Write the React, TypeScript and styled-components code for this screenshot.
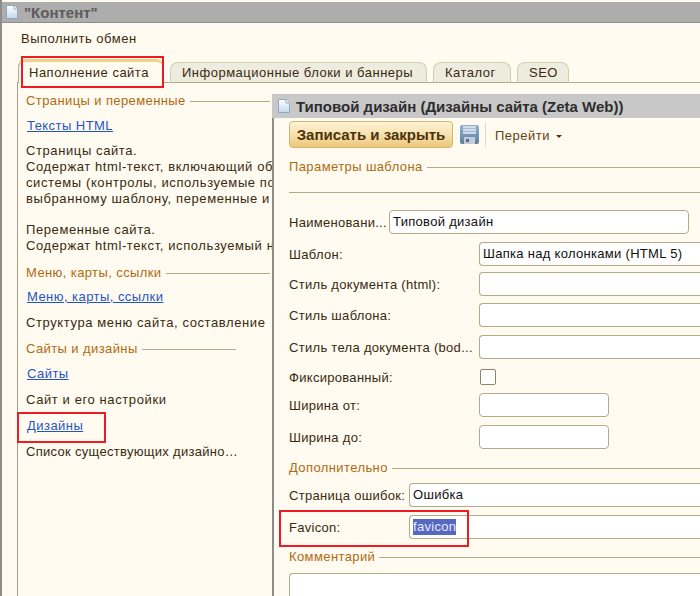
import styled, {createGlobalStyle} from "styled-components";

const GlobalStyle = createGlobalStyle`
  html, body {
    margin: 0;
    padding: 0;
    overflow: hidden;
    background: #fffbf0;
  }
  body {
    font-family: "Liberation Sans", Arial, sans-serif;
    font-size: 13px;
    color: #3a2a10;
  }
`;

const Page = styled.div`
  position: relative;
  width: 700px;
  height: 596px;
  overflow: hidden;
  box-sizing: border-box;
  padding-top: 2px;
  border-left: 2px solid #8c8c8c;
  background: #fffbf0;
`;
const TitleBar = styled.div`
  display: flex;
  align-items: center;
  gap: 6px;
  height: ${props => (props.$active ? 24 : 20)}px;
  margin-left: -2px;
  padding-left: 6px;
  background: ${props => (props.$active ? "#c8c8c8" : "#adadad")};
  border-bottom: ${props => (props.$active ? "none" : "1px solid #8c8c8c")};
  font-size: 15px;
  font-weight: 700;
  color: ${props => (props.$active ? "#2e2e2e" : "#5c5c5c")};
  white-space: nowrap;
`;
const ExchangeLink = styled.div`
  height: 16px;
  padding: 8px 0 0 19px;
  line-height: 16px;
  letter-spacing: 0.5px;
`;
const Tabs = styled.div`
  display: flex;
  align-items: flex-end;
  height: 23px;
  margin: 13px 0 0 16px;
  gap: 6px;
`;
const Tab = styled.div`
  box-sizing: border-box;
  height: ${props => (props.$active ? "24px" : "21px")};
  width: ${props => props.$width}px;
  padding-left: ${props => (props.$active ? 10 : 11)}px;
  line-height: ${props => (props.$active ? "21px" : "19px")};
  border: 1px solid ${props => (props.$active ? "#b5aa86" : "#d3cdb2")};
  border-bottom: ${props => (props.$active ? "none" : "1px solid #b5aa86")};
  border-top: ${props => (props.$active ? "3px solid #f4cf87" : "1px solid #d3cdb2")};
  border-radius: 8px 8px 0 0;
  background: ${props => (props.$active ? "#fffbf0" : "#eeebdf")};
  letter-spacing: 0.5px;
  white-space: nowrap;
  position: relative;
  z-index: 1;
`;
const Panel = styled.div`
  margin: -1px 0 0 15px;
  height: 520px;
  padding: 8px 0 0 8px;
  border-left: 1px solid #a5a08a;
  border-top: 1px solid #b5aa86;
`;
const SectionHead = styled.div`
  display: flex;
  align-items: center;
  gap: 4px;
  height: 18px;
  width: ${props => props.$width}px;
  margin-top: ${props => props.$top ?? 0}px;
  color: #b06a12;
  letter-spacing: 0.4px;
  white-space: nowrap;
  &::after {
    content: "";
    flex: 1;
    height: 1px;
    margin-top: 2px;
    background: #b5aa86;
  }
`;
const PageLink = styled.a`
  display: block;
  width: fit-content;
  margin: ${props => props.$top}px 0 0 1px;
  line-height: 16px;
  color: #1f55c4;
  text-decoration: underline;
  letter-spacing: 0.45px;
`;
const Description = styled.div`
  margin-top: ${props => props.$top}px;
  line-height: 16px;
  letter-spacing: ${props => props.$spacing ?? 0.6}px;
  white-space: nowrap;
`;
const DocWindow = styled.div`
  position: absolute;
  left: 270px;
  top: 94px;
  width: 430px;
  height: 502px;
  background: #fffbf0;
  border-left: 2px solid #8c8c8c;
`;
const Toolbar = styled.div`
  display: flex;
  align-items: center;
  height: 29px;
  margin: 2px 0 0 15px;
`;
const SaveButton = styled.div`
  box-sizing: border-box;
  width: 164px;
  height: 27px;
  line-height: 25px;
  text-align: center;
  border: 1px solid #d9b46c;
  border-radius: 4px;
  background: linear-gradient(#fdf2d6, #f7dfa8 55%, #ecc67a);
  font-size: 15px;
  font-weight: 700;
  color: #4a3410;
  white-space: nowrap;
`;
const IconBox = styled.div`
  display: flex;
  margin-left: 7px;
`;
const Divider = styled.div`
  width: 1px;
  height: 25px;
  margin-left: 6px;
  background: #e0dccb;
`;
const GoTo = styled.div`
  margin: 2px 0 0 9px;
  letter-spacing: 0.5px;
  color: #6a3f10;
  white-space: nowrap;
  &::after {
    content: "";
    display: inline-block;
    margin-left: 6px;
    vertical-align: 2px;
    border: 3px solid transparent;
    border-top: 3px solid #4a3410;
    border-bottom: none;
  }
`;
const FormBody = styled.div`
  padding-left: 15px;
`;
const Rule = styled.div`
  height: 1px;
  margin-top: 17px;
  background: #b5aa86;
`;
const Row = styled.div`
  display: flex;
  align-items: center;
  height: 24px;
  margin-top: ${props => props.$top}px;
`;
const FieldLabel = styled.div`
  flex: none;
  width: ${props => props.$width}px;
  letter-spacing: 0.3px;
  white-space: nowrap;
  overflow: hidden;
`;
const Field = styled.div`
  box-sizing: border-box;
  flex: none;
  width: ${props => props.$width}px;
  height: 24px;
  padding-left: 3px;
  line-height: 22px;
  background: #fff;
  border: 1px solid #b5aa86;
  border-right: ${props => (props.$open ? "none" : "1px solid #b5aa86")};
  border-radius: ${props => (props.$open ? "4px 0 0 4px" : "4px")};
  color: #101010;
  letter-spacing: 0.3px;
  white-space: nowrap;
`;
const Selected = styled.span`
  display: inline-block;
  line-height: 16px;
  vertical-align: middle;
  margin-top: -2px;
  background: #5468c4;
  color: #e8ecff;
`;
const CheckBox = styled.div`
  box-sizing: border-box;
  width: 16px;
  height: 16px;
  margin-left: 1px;
  background: #fff;
  border: 1px solid #8c8468;
  border-radius: 2px;
`;
const CommentBox = styled.div`
  box-sizing: border-box;
  height: 40px;
  margin-top: 8px;
  background: #fff;
  border: 1px solid #b5aa86;
  border-right: none;
  border-radius: 4px 0 0 0;
`;
const Callout = styled.div`
  position: absolute;
  left: ${props => props.$x}px;
  top: ${props => props.$y}px;
  width: ${props => props.$w}px;
  height: ${props => props.$h}px;
  box-sizing: border-box;
  border: 2px solid #ed1c24;
  z-index: 5;
`;

function DocIcon() {
    return (
        <svg width="12" height="14" viewBox="0 0 12 14">
            <defs>
                <linearGradient id="docFill" x1="0" y1="0" x2="0" y2="1">
                    <stop offset="0" stopColor="#ffffff"/>
                    <stop offset="1" stopColor="#c4d8ee"/>
                </linearGradient>
            </defs>
            <path d="M.5 .5H8L11.5 4V13.5H.5Z" fill="url(#docFill)" stroke="#8fa8c2"/>
            <path d="M8 .5V4H11.5" fill="#fff" stroke="#8fa8c2"/>
        </svg>
    );
}

function SaveIcon() {
    return (
        <svg width="19" height="19" viewBox="0 0 19 19">
            <defs>
                <linearGradient id="diskFill" x1="0" y1="0" x2="0" y2="1">
                    <stop offset="0" stopColor="#8fb0d2"/>
                    <stop offset="1" stopColor="#5f7f9f"/>
                </linearGradient>
            </defs>
            <rect x="0" y="0" width="19" height="19" rx="2" fill="url(#diskFill)"/>
            <rect x="3" y="1" width="13" height="8" fill="#cfdce9"/>
            <rect x="3" y="3" width="13" height="1" fill="#a9bfd4"/>
            <rect x="3" y="6" width="13" height="1" fill="#a9bfd4"/>
            <rect x="4" y="12" width="11" height="7" fill="#c3cdd8"/>
            <rect x="6" y="14" width="3" height="3" fill="#4f6d8c"/>
        </svg>
    );
}

function App() {
    return (
        <Page>
            <GlobalStyle/>
            <TitleBar><DocIcon/>"Контент"</TitleBar>
            <ExchangeLink>Выполнить обмен</ExchangeLink>
            <Tabs>
                <Tab $active $width={146}>Наполнение сайта</Tab>
                <Tab $width={257}>Информационные блоки и баннеры</Tab>
                <Tab $width={78}>Каталог</Tab>
                <Tab $width={52}>SEO</Tab>
            </Tabs>
            <Panel>
                <SectionHead $width={244}>Страницы и переменные</SectionHead>
                <PageLink $top={9}>Тексты HTML</PageLink>
                <Description $top={9}>
                    Страницы сайта.<br/>
                    Содержат html-текст, включающий об<br/>
                    системы (контролы, используемые по<br/>
                    выбранному шаблону, переменные и
                </Description>
                <Description $top={15}>
                    Переменные сайта.<br/>
                    Содержат html-текст, используемый н
                </Description>
                <SectionHead $width={244} $top={9}>Меню, карты, ссылки</SectionHead>
                <PageLink $top={8}>Меню, карты, ссылки</PageLink>
                <Description $top={10}>Структура меню сайта, составление</Description>
                <SectionHead $width={210} $top={8}>Сайты и дизайны</SectionHead>
                <PageLink $top={9}>Сайты</PageLink>
                <Description $top={10}>Сайт и его настройки</Description>
                <PageLink $top={10}>Дизайны</PageLink>
                <Description $top={10} $spacing={0.3}>Список существующих дизайно…</Description>
            </Panel>

            <DocWindow>
                <TitleBar $active>
                    <DocIcon/>Типовой дизайн (Дизайны сайта (Zeta Web))
                </TitleBar>
                <Toolbar>
                    <SaveButton>Записать и закрыть</SaveButton>
                    <IconBox><SaveIcon/></IconBox>
                    <Divider/>
                    <GoTo>Перейти</GoTo>
                </Toolbar>
                <FormBody>
                    <SectionHead $width={411} $top={8}>Параметры шаблона</SectionHead>
                    <Rule/>
                    <Row $top={17}>
                        <FieldLabel $width={100}>Наименовани...</FieldLabel>
                        <Field $width={300}>Типовой дизайн</Field>
                    </Row>
                    <Row $top={8}>
                        <FieldLabel $width={190}>Шаблон:</FieldLabel>
                        <Field $open $width={221}>Шапка над колонками (HTML 5)</Field>
                    </Row>
                    <Row $top={6}>
                        <FieldLabel $width={190}>Стиль документа (html):</FieldLabel>
                        <Field $open $width={221}/>
                    </Row>
                    <Row $top={7}>
                        <FieldLabel $width={190}>Стиль шаблона:</FieldLabel>
                        <Field $open $width={221}/>
                    </Row>
                    <Row $top={8}>
                        <FieldLabel $width={190}>Стиль тела документа (bod...</FieldLabel>
                        <Field $open $width={221}/>
                    </Row>
                    <Row $top={6}>
                        <FieldLabel $width={190}>Фиксированный:</FieldLabel>
                        <CheckBox/>
                    </Row>
                    <Row $top={4}>
                        <FieldLabel $width={190}>Ширина от:</FieldLabel>
                        <Field $width={130}/>
                    </Row>
                    <Row $top={8}>
                        <FieldLabel $width={190}>Ширина до:</FieldLabel>
                        <Field $width={130}/>
                    </Row>
                    <SectionHead $width={411} $top={9}>Дополнительно</SectionHead>
                    <Row $top={7}>
                        <FieldLabel $width={120}>Страница ошибок:</FieldLabel>
                        <Field $open $width={291}>Ошибка</Field>
                    </Row>
                    <Row $top={8}>
                        <FieldLabel $width={120}>Favicon:</FieldLabel>
                        <Field $open $width={291}><Selected>favicon</Selected></Field>
                    </Row>
                    <SectionHead $width={411} $top={8}>Комментарий</SectionHead>
                    <CommentBox/>
                </FormBody>
            </DocWindow>

            <Callout $x={19} $y={56} $w={143} $h={32}/>
            <Callout $x={15} $y={412} $w={89} $h={31}/>
            <Callout $x={277} $y={510} $w={190} $h={37}/>
        </Page>
    );
}

export default App;
